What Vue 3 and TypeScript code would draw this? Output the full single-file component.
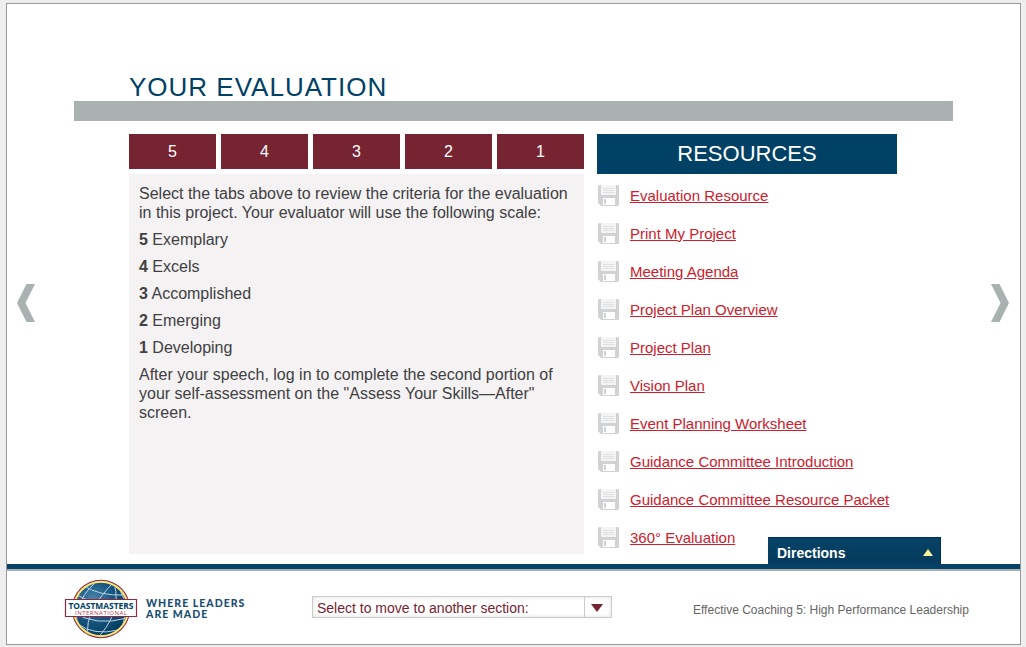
<script setup lang="ts">
import { ref } from 'vue'

interface Rating {
  score: number
  label: string
}

const ratings: Rating[] = [
  { score: 5, label: 'Exemplary' },
  { score: 4, label: 'Excels' },
  { score: 3, label: 'Accomplished' },
  { score: 2, label: 'Emerging' },
  { score: 1, label: 'Developing' },
]

const resources: string[] = [
  'Evaluation Resource',
  'Print My Project',
  'Meeting Agenda',
  'Project Plan Overview',
  'Project Plan',
  'Vision Plan',
  'Event Planning Worksheet',
  'Guidance Committee Introduction',
  'Guidance Committee Resource Packet',
  '360° Evaluation',
]

const activeTab = ref<number | null>(null)
</script>

<template>
  <div class="page">
    <div class="frame">
      <main class="stage">
        <button class="nav prev" aria-label="Previous">
          <svg width="18" height="38" viewBox="0 0 18 38"><path d="M9.5 0H18L8.5 19 18 38H9.5L0 19Z" fill="#a9b2b1" /></svg>
        </button>
        <section class="content">
          <h1 class="title">YOUR EVALUATION</h1>
          <div class="rule"></div>
          <div class="columns">
            <div class="evaluation">
              <div class="tabs">
                <button v-for="r in ratings" :key="r.score" class="tab" @click="activeTab = r.score">{{ r.score }}</button>
              </div>
              <div class="panel">
                <p>Select the tabs above to review the criteria for the evaluation<br />in this project. Your evaluator will use the following scale:</p>
                <p v-for="r in ratings" :key="r.score"><b>{{ r.score }}</b> {{ r.label }}</p>
                <p>After your speech, log in to complete the second portion of<br />your self-assessment on the "Assess Your Skills—After"<br />screen.</p>
              </div>
            </div>
            <aside class="resources">
              <h2>RESOURCES</h2>
              <ul>
                <li v-for="item in resources" :key="item">
                  <svg class="disk" width="21" height="21" viewBox="0 0 21 21">
                    <path d="M1 0H20L21 1V20L20 21H3L0 18V1Z" fill="#d1d2d4" />
                    <path d="M3 0H18V10H3Z" fill="#f4f4f5" />
                    <path d="M5 3.5H16M5 5.5H16M5 7.5H16" stroke="#e0e1e2" />
                    <path d="M5 13H17V20H5Z" fill="#fff" />
                    <path d="M6 14H8V19H6Z" fill="#d1d2d4" />
                  </svg>
                  <a href="#">{{ item }}</a>
                </li>
              </ul>
            </aside>
          </div>
        </section>
        <button class="nav next" aria-label="Next">
          <svg width="18" height="38" viewBox="0 0 18 38"><path d="M8.5 0H0L9.5 19 0 38H8.5L18 19Z" fill="#a9b2b1" /></svg>
        </button>
        <button class="directions">
          <span>Directions</span>
          <svg width="10" height="7" viewBox="0 0 10 7"><path d="M5 0L10 7H0Z" fill="#fff799" /></svg>
        </button>
      </main>
      <footer class="footer">
        <div class="brand">
          <svg class="logo" width="74" height="62" viewBox="0 0 74 62">
            <defs>
              <radialGradient id="globe" cx="35%" cy="32%" r="75%">
                <stop offset="0" stop-color="#4a86ad" />
                <stop offset=".45" stop-color="#1b5a85" />
                <stop offset="1" stop-color="#003a60" />
              </radialGradient>
              <clipPath id="disc"><circle cx="37" cy="31" r="26.2" /></clipPath>
            </defs>
            <circle cx="37" cy="31" r="29.2" fill="#8b2a42" />
            <circle cx="37" cy="31" r="28.2" fill="#f7e878" />
            <circle cx="37" cy="31" r="26.2" fill="url(#globe)" />
            <g clip-path="url(#disc)" fill="none" stroke="#bdd2df" stroke-width="1">
              <path d="M50 4Q36 18 29 31T24 59M32 4Q18 16 14 31T17 52M50 4Q55 24 49 37T34 60M50 4Q64 20 61 38T46 58" />
              <path d="M20 8Q36 18 60 17M13 17Q34 30 64 27M9 34Q32 49 63 40M14 46Q30 58 54 52" />
            </g>
            <path d="M1.5 21.5H72.5V38.5H1.5Z" fill="#fff" stroke="#8b2a42" stroke-width="1.2" />
            <text x="37" y="30.6" textLength="65" lengthAdjust="spacingAndGlyphs" class="logo-name">TOASTMASTERS</text>
            <text x="37" y="37" textLength="52" class="logo-sub">INTERNATIONAL</text>
          </svg>
          <div class="tagline">WHERE LEADERS<br />ARE MADE</div>
        </div>
        <button class="select">
          <span class="select-label">Select to move to another section:</span>
          <span class="select-arrow">
            <svg width="12" height="8" viewBox="0 0 12 8"><path d="M0 0H12L6 8Z" fill="#772432" /></svg>
          </span>
        </button>
        <div class="course">Effective Coaching 5: High Performance Leadership</div>
      </footer>
    </div>
  </div>
</template>

<style>
body {
  margin: 0;
  background: #eee;
}
</style>

<style scoped>
.page {
  box-sizing: border-box;
  width: 1026px;
  height: 647px;
  padding: 3px 5px 2px 6px;
  background: #eee;
  font-family: 'Liberation Sans', Arial, sans-serif;
  overflow: hidden;
}
button {
  border: 0;
  padding: 0;
  margin: 0;
  background: none;
  font: inherit;
  color: inherit;
}
.frame {
  box-sizing: border-box;
  width: 1015px;
  height: 642px;
  border: 1px solid #999;
  background: #fff;
  display: flex;
  flex-direction: column;
}
.stage {
  position: relative;
  height: 560px;
  flex: none;
  display: flex;
}
.nav {
  width: 67px;
  height: 38px;
  margin-top: 280px;
  display: flex;
}
.nav svg {
  display: block;
}
.prev {
  padding-left: 10px;
}
.next {
  padding-left: 38px;
}
.content {
  width: 879px;
  flex: none;
}
.title {
  margin: 0;
  padding: 65px 0 0 55px;
  height: 32px;
  font-size: 26px;
  line-height: 36px;
  font-weight: 400;
  letter-spacing: 1px;
  color: #004165;
  white-space: nowrap;
}
.rule {
  height: 20px;
  background: #a9b2b1;
}
.columns {
  display: flex;
  gap: 13px;
  padding: 13px 0 0 55px;
}
.evaluation {
  width: 455px;
}
.tabs {
  display: grid;
  grid-template-columns: repeat(5, 87px);
  gap: 5px;
  margin-bottom: 5px;
}
.tab {
  height: 35px;
  background: #772432;
  color: #fff;
  font-size: 16px;
  line-height: 35px;
}
.panel {
  box-sizing: border-box;
  height: 380px;
  padding: 10px;
  background: #f4f2f3;
  color: #414042;
  font-size: 16px;
  line-height: 19px;
  white-space: nowrap;
}
.panel p {
  margin: 0 0 8px;
}
.resources {
  width: 300px;
}
.resources h2 {
  margin: 0;
  height: 40px;
  line-height: 39px;
  background: #004165;
  color: #fff;
  font-size: 22px;
  font-weight: 400;
  text-align: center;
}
.resources ul {
  margin: 0;
  padding: 3px 0 0 1px;
  list-style: none;
}
.resources li {
  height: 38px;
  display: flex;
  align-items: center;
  gap: 11px;
}
.resources a {
  color: #cd202c;
  font-size: 15px;
  line-height: 18px;
  white-space: nowrap;
}
.disk {
  flex: none;
  margin-bottom: 1px;
}
.directions {
  position: absolute;
  left: 761px;
  bottom: 0;
  box-sizing: border-box;
  width: 173px;
  height: 27px;
  padding: 3px 7px 0 9px;
  display: flex;
  align-items: center;
  justify-content: space-between;
  background: linear-gradient(#064267, #053b5c);
  border: solid #003052;
  border-width: 1px 1px 0 0;
  color: #fff;
  font-size: 14px;
  font-weight: 700;
}
.directions svg {
  margin-bottom: 1px;
}
.footer {
  flex: 1;
  border-top: 5px solid #064267;
  box-shadow: inset 0 2px #a9b2b1;
  display: flex;
}
.brand {
  width: 305px;
  padding: 9px 0 0 57px;
  box-sizing: border-box;
  display: flex;
}
.logo {
  flex: none;
}
.logo-name {
  font: 700 8.6px 'Open Sans', sans-serif;
  fill: #004165;
  text-anchor: middle;
}
.logo-sub {
  font: 6px 'Open Sans', sans-serif;
  fill: #b43b53;
  text-anchor: middle;
}
.tagline {
  margin: 20px 0 0 8px;
  font: 900 10.5px/11px Lato, sans-serif;
  letter-spacing: 1.02px;
  color: #1b4f73;
  white-space: nowrap;
}
.select {
  box-sizing: border-box;
  width: 300px;
  height: 22px;
  margin-top: 27px;
  border: 1px solid #ccc;
  box-shadow: inset 0 0 4px #ddd;
  display: flex;
  color: #772432;
  font-size: 14px;
  line-height: 22px;
}
.select-label {
  flex: 1;
  padding-left: 4px;
  text-align: left;
  white-space: nowrap;
}
.select-arrow {
  box-sizing: border-box;
  width: 27px;
  height: 20px;
  padding: 2px 2px 0 0;
  border-left: 1px solid #ccc;
  display: flex;
  align-items: center;
  justify-content: center;
}
.course {
  margin: 34px 0 0 81px;
  color: #666;
  font-size: 12px;
  line-height: 15px;
  white-space: nowrap;
}
</style>
